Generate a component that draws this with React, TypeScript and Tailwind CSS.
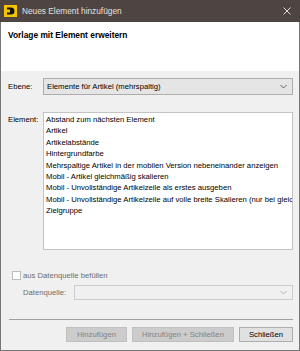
const font = { fontFamily: '"Liberation Sans", Arial, sans-serif' }

const items = [
  'Abstand zum nächsten Element',
  'Artikel',
  'Artikelabstände',
  'Hintergrundfarbe',
  'Mehrspaltige Artikel in der mobilen Version nebeneinander anzeigen',
  'Mobil - Artikel gleichmäßig skalieren',
  'Mobil - Unvollständige Artikelzeile als erstes ausgeben',
  'Mobil - Unvollständige Artikelzeile auf volle breite Skalieren (nur bei gleich',
  'Zielgruppe',
]

function Chevron({ color }: { color: string }) {
  return (
    <svg width="7" height="5" viewBox="0 0 7 5" className="shrink-0">
      <path d="M0.5 1 L3.5 4 L6.5 1" fill="none" stroke={color} strokeWidth="1" />
    </svg>
  )
}

export default function App() {
  return (
    <div className="w-[300px] h-[351px] flex flex-col overflow-hidden text-black" style={font}>
      {/* title bar */}
      <div className="h-[22px] shrink-0 bg-[#4e4441] flex items-center pl-[4px] pr-[9px]">
        <svg width="13" height="12" viewBox="0 0 13 12" className="shrink-0">
          <rect width="13" height="12" fill="#f5c400" />
          <path d="M3 2.5 H7 A3.5 3.5 0 0 1 7 9.5 H3 V7.5 H6 V4.5 H3 Z" fill="#111" />
        </svg>
        <span className="ml-[5px] text-[8.3px] leading-none text-[#e6e1df]">Neues Element hinzufügen</span>
        <svg width="8" height="8" viewBox="0 0 8 8" className="ml-auto">
          <path d="M0.5 0.5 L7.5 7.5 M7.5 0.5 L0.5 7.5" stroke="#ddd" strokeWidth="1" />
        </svg>
      </div>

      <div className="flex-1 flex flex-col border-x border-b border-[#767676] bg-[#f0f0f0]">
        {/* header */}
        <div className="h-[49px] shrink-0 bg-white pl-[7px] pt-[8px]">
          <div className="text-[8.4px] font-bold leading-[10px]">Vorlage mit Element erweitern</div>
        </div>

        <div className="flex flex-col pl-[7px] pr-[6px]">
          {/* Ebene */}
          <div className="mt-[7px] flex items-center h-[17px]">
            <span className="w-[35px] text-[7.7px]">Ebene:</span>
            <div className="flex-1 h-[17px] flex items-center bg-[#e5e5e5] border border-[#adadad] pl-[3px] pr-[5px]">
              <span className="text-[7.7px] leading-none">Elemente für Artikel (mehrspaltig)</span>
              <span className="ml-auto"><Chevron color="#606060" /></span>
            </div>
          </div>

          {/* Element */}
          <div className="mt-[17px] flex items-start">
            <span className="w-[35px] text-[7.7px] mt-[2px]">Element:</span>
            <div className="flex-1 h-[138px] bg-white border border-[#c4c4c4] pl-[2px] pt-[1px] overflow-hidden">
              {items.map(t => (
                <div key={t} className="text-[7.7px] leading-[11.4px] whitespace-nowrap">{t}</div>
              ))}
            </div>
          </div>

          {/* Datenquelle */}
          <div className="mt-[21px] flex items-center h-[9px] pl-[4px]">
            <div className="w-[9px] h-[9px] bg-white border border-[#bcbcbc]" />
            <span className="ml-[2px] text-[7.7px] text-[#6d6d6d]">aus Datenquelle befüllen</span>
          </div>
          <div className="mt-[5px] flex items-center h-[15px] pl-[15px]">
            <span className="w-[51px] text-[7.7px] text-[#6d6d6d]">Datenquelle:</span>
            <div className="flex-1 h-[15px] flex items-center bg-[#f0f0f0] border border-[#cccccc] pr-[5px]">
              <span className="ml-auto"><Chevron color="#b5b5b5" /></span>
            </div>
          </div>

          <div className="mt-[19px] h-px bg-[#a0a0a0] ml-px" />

          {/* buttons */}
          <div className="mt-[7px] flex justify-end gap-[5px]">
            <div className="w-[61px] h-[15px] flex items-center justify-center bg-[#cccccc] border border-[#bfbfbf] text-[7.7px] text-[#838383]">Hinzufügen</div>
            <div className="w-[102px] h-[15px] flex items-center justify-center bg-[#cccccc] border border-[#bfbfbf] text-[7.7px] text-[#838383]">Hinzufügen + Schließen</div>
            <div className="w-[54px] h-[15px] flex items-center justify-center bg-[#e1e1e1] border border-[#adadad] text-[7.7px]">Schließen</div>
          </div>
        </div>
      </div>
    </div>
  )
}
